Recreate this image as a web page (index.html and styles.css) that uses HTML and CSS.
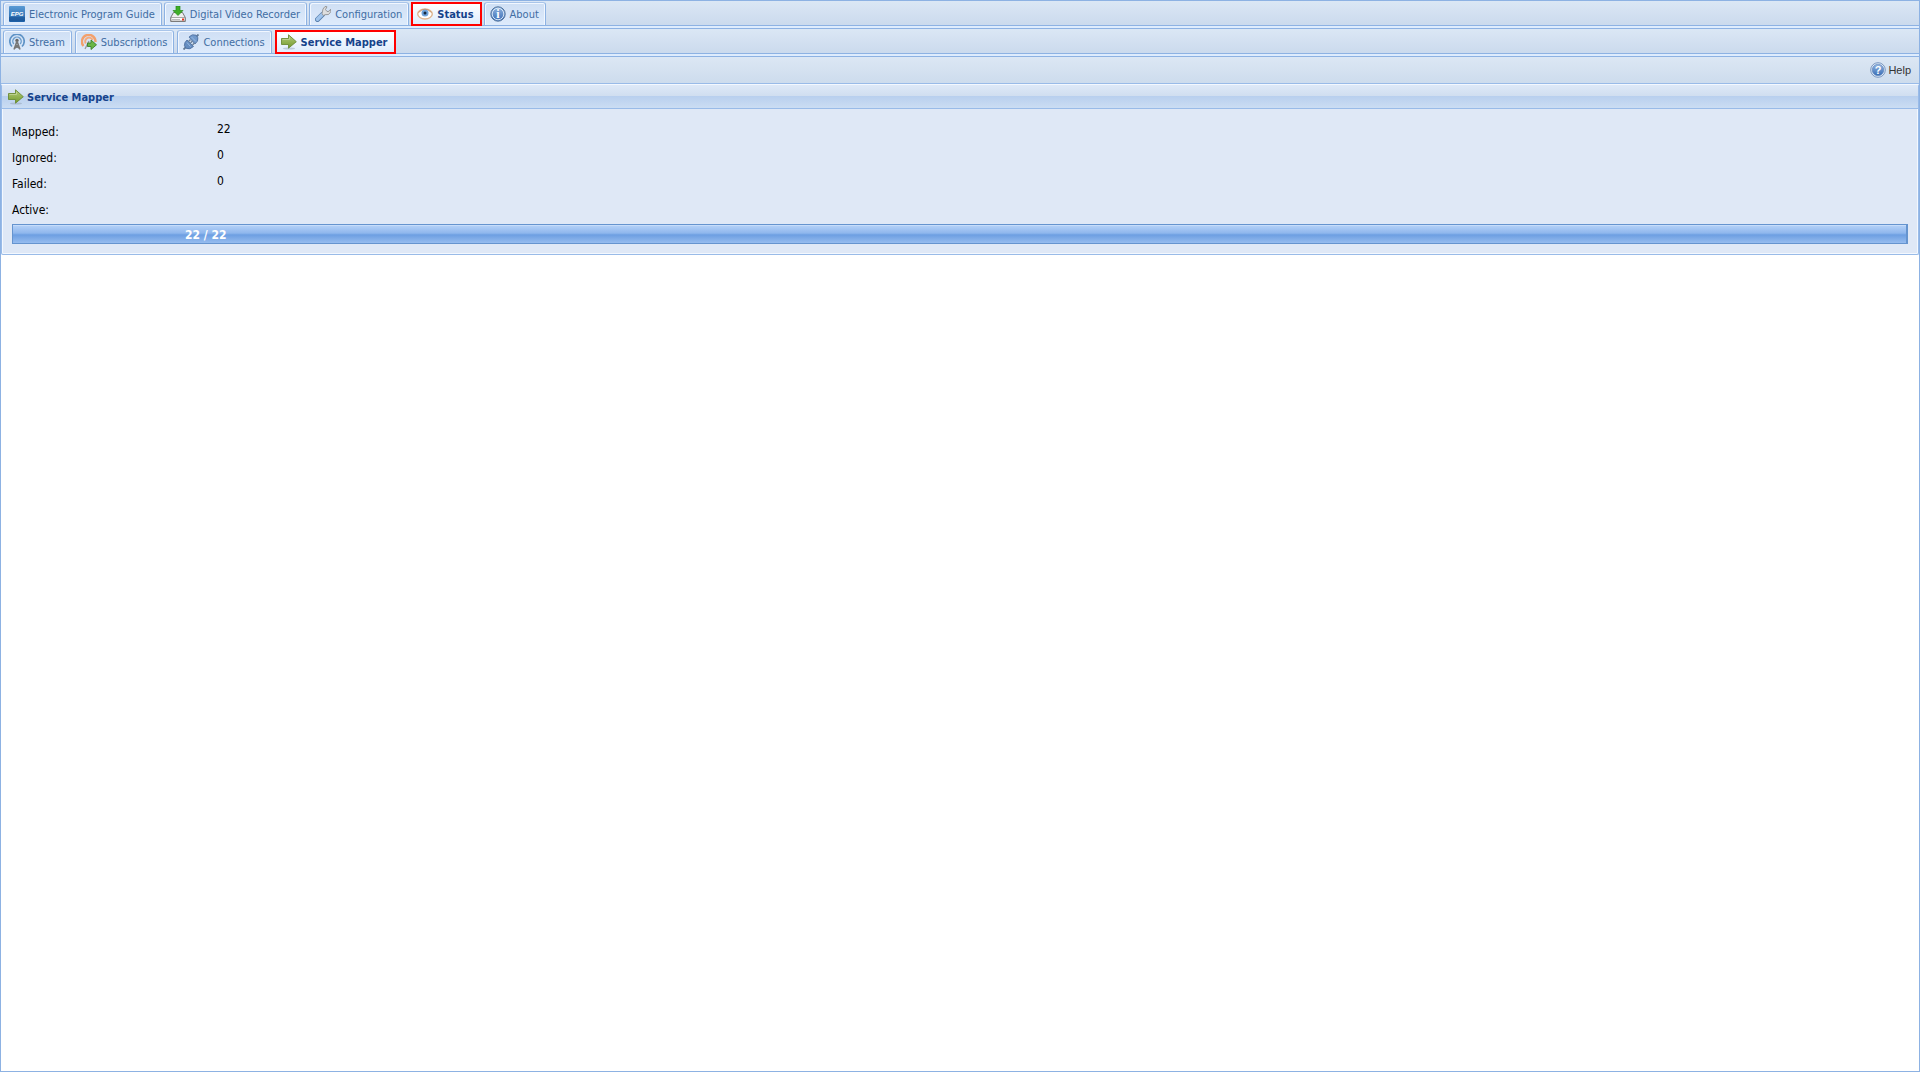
FILE: index.html
```html
<!DOCTYPE html>
<html lang="en">
<head>
    <meta charset="UTF-8">
    <meta name="viewport" content="width=device-width, initial-scale=1.0">
    <title>Service Mapper</title>
    <link rel="stylesheet" href="styles.css">
</head>
<body>
    <!-- Gradients and icons used more than once -->
    <svg class="defs" aria-hidden="true">
        <linearGradient id="green" x1="0" y1="0" x2="0" y2="1">
            <stop offset="0" stop-color="#b5cc7c"/>
            <stop offset="1" stop-color="#729a2c"/>
        </linearGradient>
        <linearGradient id="blue" x1="0" y1="0" x2="0" y2="1">
            <stop offset="0" stop-color="#5b9bd5"/>
            <stop offset="1" stop-color="#1c5fa6"/>
        </linearGradient>
        <linearGradient id="ball" x1="0" y1="0" x2="0" y2="1">
            <stop offset="0" stop-color="#92b5e0"/>
            <stop offset="1" stop-color="#386cb5"/>
        </linearGradient>
        <symbol id="arrow" viewBox="0 0 16 16">
            <ellipse cx="8" cy="14.5" rx="6" ry="1" fill="#8c9cae" opacity=".45"/>
            <path d="M.5 4.500h7V.8L15.300 7.700l-7.800 6.500v-3.700h-7z" fill="url(#green)" stroke="#6b8b35" stroke-width=".9"/>
            <path d="M1.500 5.500h7V3.200" fill="none" stroke="#d0dfaa" stroke-width=".6"/>
        </symbol>
    </svg>

    <div class="viewport">
        <nav class="tab-bar" role="tablist">
            <button type="button" class="tab" role="tab">
                <svg class="icon" viewBox="0 0 16 16" aria-hidden="true">
                    <rect width="16" height="16" rx="1" fill="url(#blue)"/>
                    <path d="M0 11h16v4H0z" fill="#174f91" opacity=".5"/>
                    <text class="epg-text" x="8" y="10">EPG</text>
                </svg>
                Electronic Program Guide
            </button>
            <button type="button" class="tab" role="tab">
                <svg class="icon" viewBox="0 0 16 16">
                    <path d="M3.500 6.500h9l2.800 5v4H.7v-4z" fill="#eee" stroke="#777"/>
                    <path d="M1 11.500h14v3.500H1z" fill="#fafafa" stroke="#858585" stroke-width=".7"/>
                    <path d="M2 13.500h8" stroke="#bbb"/>
                    <path d="M12 12.500h2v2h-2z" fill="#e33420"/>
                    <path d="M6 0h4v4.500h3L8 9.500l-5-5h3z" fill="#3fae28" stroke="#278b17" stroke-width=".7"/>
                </svg>
                Digital Video Recorder
            </button>
            <button type="button" class="tab" role="tab">
                <svg class="icon" viewBox="0 0 16 16">
                    <path d="M2.500 13.500l5-5" stroke="#587fac" stroke-width="5" stroke-linecap="round"/>
                    <path d="M2.500 13.200l5-5" stroke="#a0c4ec" stroke-width="3.500" stroke-linecap="round"/>
                    <path d="M7 7.500l1-4.500 2-2.500 2 .3-1.500 2.700 1.500 2 2-.2 1.500-2 .3 2.500-2.300 2.700-3.500.2-1.500 1z" fill="#dedede" stroke="#888" stroke-width=".8"/>
                </svg>
                Configuration
            </button>
            <button type="button" class="tab active" role="tab" aria-selected="true">
                <svg class="icon" viewBox="0 0 16 16">
                    <ellipse cx="8" cy="8" rx="7.300" ry="5" fill="#fff" stroke="#dfb691" stroke-width="1.400"/>
                    <path d="M1.500 6.500Q8 0 14.500 6.500" fill="none" stroke="#c99468"/>
                    <circle cx="8" cy="7" r="3.500" fill="#6ea2da"/>
                    <circle cx="8" cy="7" r="1.500" fill="#16283f"/>
                </svg>
                Status
            </button>
            <button type="button" class="tab" role="tab">
                <svg class="icon" viewBox="0 0 16 16" aria-hidden="true">
                    <circle cx="8" cy="8" r="7.200" fill="url(#ball)" stroke="#52749c"/>
                    <circle cx="8" cy="8" r="5.800" fill="none" stroke="#e3eefb" stroke-width=".9"/>
                    <text class="info-text" x="8" y="12">i</text>
                </svg>
                About
            </button>
        </nav>

        <nav class="tab-bar sub" role="tablist">
            <button type="button" class="tab" role="tab">
                <svg class="icon" viewBox="0 0 16 16">
                    <path d="M3 12.500A7.200 7.200 0 1 1 13 12.500" fill="none" stroke="#5f93c6" stroke-width="1.700"/>
                    <path d="M4.800 10A4.200 4.200 0 1 1 11.200 10" fill="none" stroke="#6b9ccb" stroke-width="1.400"/>
                    <circle cx="8" cy="6.500" r="1.700" fill="#666"/>
                    <path d="M8 7L5 15.500M8 7l3 8.500M6.300 11.500h3.400M5 14.500l5-3M11 14.500l-5-3" fill="none" stroke="#777" stroke-width="1.500"/>
                </svg>
                Stream
            </button>
            <button type="button" class="tab" role="tab">
                <svg class="icon" viewBox="0 0 16 16">
                    <path d="M2.500 12A6.800 6.800 0 1 1 14.500 8" fill="none" stroke="#f3a06c" stroke-width="2.400"/>
                    <path d="M4.800 9.500A3.800 3.800 0 1 1 11.500 6" fill="none" stroke="#f5aa7c" stroke-width="2"/>
                    <path d="M8 7l-4 8M6 11.500h3" stroke="#999" stroke-width="1.300"/>
                    <path d="M6.500 9H10V6l5.500 4.800L10 15.500v-3H6.500z" fill="#69b545" stroke="#3c822b" stroke-width=".9"/>
                </svg>
                Subscriptions
            </button>
            <button type="button" class="tab" role="tab">
                <svg class="icon" viewBox="0 0 16 16">
                    <path d="M13 3L15.500.5M.5 15.500L3 13" stroke="#5f7896" stroke-width="1.800"/>
                    <path d="M6 3Q9-.5 13 1.200Q16 3.500 14.500 7L12 10z" fill="#7199cb" stroke="#48699a" stroke-width=".8"/>
                    <path d="M4 6l6.500 6.500Q7 16 3.500 14.500Q0 12 2 8.500z" fill="#658dc0" stroke="#48699a" stroke-width=".8"/>
                    <path d="M5.500 7.500l2-2M9.500 11l2-2M7.500 9l2-2" stroke="#6d8199" stroke-width="1.500"/>
                    <path d="M8.500 3l4.500 4.500M4 8.500l3.500 4" stroke="#9bbce3"/>
                </svg>
                Connections
            </button>
            <button type="button" class="tab active" role="tab" aria-selected="true">
                <svg class="icon"><use href="#arrow"/></svg>
                Service Mapper
            </button>
        </nav>

        <div class="toolbar">
            <button type="button" class="help">
                <svg class="icon" viewBox="0 0 16 16" aria-hidden="true">
                    <circle cx="8" cy="8" r="7.300" fill="#e6effa" stroke="#7895bf"/>
                    <circle cx="8" cy="8" r="5.800" fill="url(#ball)" stroke="#5c83b8" stroke-width=".6"/>
                    <text class="help-text" x="8" y="12">?</text>
                </svg>
                Help
            </button>
        </div>

        <section class="panel">
            <h2 class="panel-header">
                <svg class="icon"><use href="#arrow"/></svg>
                Service Mapper
            </h2>
            <div class="panel-body">
                <dl class="fields">
                    <dt>Mapped:</dt>
                    <dd>22</dd>
                    <dt>Ignored:</dt>
                    <dd>0</dd>
                    <dt>Failed:</dt>
                    <dd>0</dd>
                    <dt>Active:</dt>
                    <dd></dd>
                </dl>
                <div class="progress" role="progressbar" aria-valuenow="22" aria-valuemin="0" aria-valuemax="22">
                    <div class="progress-bar" style="width: 100%">22 / 22</div>
                </div>
            </div>
        </section>
    </div>
</body>
</html>
```
FILE: styles.css
```css
* {
    box-sizing: border-box;
}

body {
    margin: 0;
    font-family: "DejaVu Sans Condensed", "DejaVu Sans", Tahoma, sans-serif;
    font-size: 11px;
    background-color: #fff;
}

button {
    font: inherit;
    cursor: pointer;
}

.defs {
    position: absolute;
    width: 0;
    height: 0;
}

.icon {
    flex: none;
    width: 16px;
    height: 16px;
}

.icon text {
    fill: #fff;
    font-weight: bold;
    text-anchor: middle;
}

.epg-text {
    font-family: "Liberation Sans", Arial, sans-serif;
    font-size: 6px;
    font-style: italic;
}

.info-text {
    font-family: "Liberation Serif", serif;
    font-size: 12px;
}

.help-text {
    font-family: "Liberation Sans", Arial, sans-serif;
    font-size: 11px;
}

.viewport {
    min-height: 100vh;
    border: 1px solid #8db2e3;
}

/* Tabs */
.tab-bar {
    display: flex;
    gap: 2px;
    height: 28px;
    padding: 1px 2px 0;
    border-bottom: 1px solid #8db2e3;
    background: linear-gradient(#dbe7f5, #cbdaed 24px, #8db2e3 24px, #8db2e3 25px, #deecfd 25px);
}

.tab-bar.sub {
    gap: 3px;
}

.tab {
    display: flex;
    align-items: center;
    gap: 4px;
    height: 24px;
    padding: 0 6px 0 5px;
    border: 1px solid #8db2e3;
    border-top-color: #a9c5ea;
    border-radius: 3px 3px 0 0;
    background: linear-gradient(#cfdff4, #deebfc);
    box-shadow: inset 1px 1px 0 #f1f7ff, inset -1px 0 0 #f1f7ff;
    color: #416da3;
    white-space: nowrap;
}

.tab.active {
    padding-left: 4px;
    border: 2px solid #f00;
    border-radius: 0;
    background: linear-gradient(#fff, #deecfd);
    box-shadow: none;
    color: #15428b;
    font-weight: bold;
}

/* Toolbar */
.toolbar {
    display: flex;
    justify-content: flex-end;
    align-items: center;
    height: 27px;
    padding: 0 8px;
    border-bottom: 1px solid #99bbe8;
    background: linear-gradient(#dce7f4, #cddced);
}

.help {
    display: flex;
    align-items: center;
    gap: 2px;
    padding: 0;
    border: 0;
    background: none;
    color: #333;
    font-family: "Liberation Sans", Arial, sans-serif;
}

/* Panel */
.panel {
    border: 1px solid #99bbe8;
    border-top: 0;
    border-radius: 2px;
    background-color: #dfe8f6;
    box-shadow: inset 0 0 0 1px #f3f8ff;
}

.panel-header {
    display: flex;
    align-items: center;
    gap: 3px;
    height: 25px;
    margin: 0;
    padding: 2px 6px 0;
    border-bottom: 1px solid #99bbe8;
    background: linear-gradient(#dfeaf8, #d0def0 12px, #b8cfee 12px, #cbddf3);
    box-shadow: inset 0 1px 0 #f3f8ff;
    color: #15428b;
    font-size: 11px;
}

.panel-body {
    padding: 10px;
}

.fields {
    display: grid;
    grid-template-columns: 205px 1fr;
    grid-auto-rows: 26px;
    margin: 0 0 1px;
    font-size: 12px;
    line-height: 20px;
}

.fields dt {
    padding-top: 3px;
}

.fields dd {
    margin: 0;
}

.progress {
    height: 20px;
    border: 1px solid #6594cf;
    background-color: #e0e8f3;
}

.progress-bar {
    height: 100%;
    padding-left: 172px;
    border-right: 1px solid #6594cf;
    background: linear-gradient(#b6d2f8, #8fb7ed 45%, #6d9fe2 55%, #96bcef);
    box-shadow: inset 0 1px 0 #c6dcfa;
    color: #fff;
    font-size: 12px;
    font-weight: bold;
    line-height: 20px;
}
```
